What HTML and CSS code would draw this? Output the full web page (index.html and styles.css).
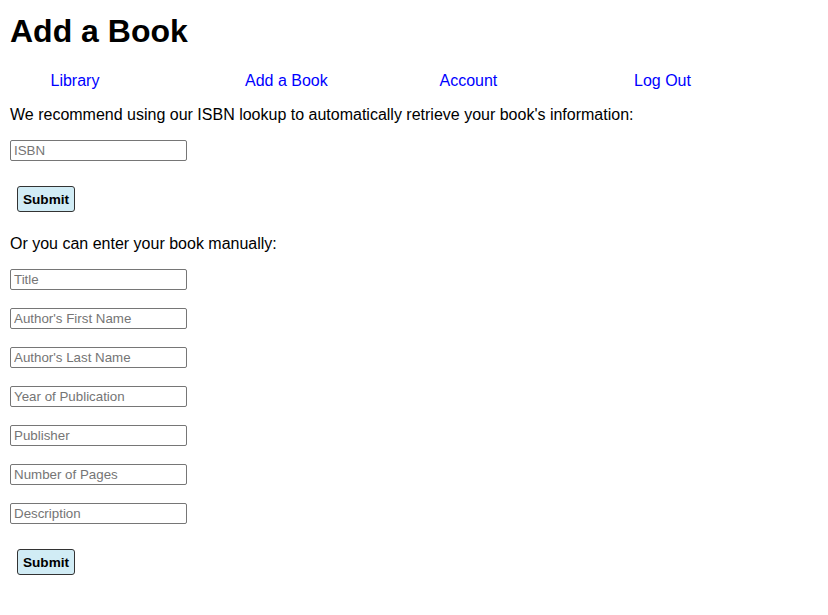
FILE: index.html
```html
<!DOCTYPE html>
<html>
<head>
<meta charset="utf-8">
<title>Add a Book</title>
<link rel="stylesheet" href="styles.css">
</head>
<body>
<h1 class="title">Add a Book</h1>
<nav class="nav">
  <a href="#">Library</a>
  <a href="#">Add a Book</a>
  <a href="#">Account</a>
  <a href="#">Log Out</a>
</nav>
<p class="text">We recommend using our ISBN lookup to automatically retrieve your book's information:</p>
<form class="form">
  <input class="field" type="text" placeholder="ISBN">
  <button class="submit" type="button">Submit</button>
</form>
<p class="text">Or you can enter your book manually:</p>
<form class="form">
  <input class="field" type="text" placeholder="Title">
  <input class="field" type="text" placeholder="Author's First Name">
  <input class="field" type="text" placeholder="Author's Last Name">
  <input class="field" type="text" placeholder="Year of Publication">
  <input class="field" type="text" placeholder="Publisher">
  <input class="field" type="text" placeholder="Number of Pages">
  <input class="field" type="text" placeholder="Description">
  <button class="submit" type="button">Submit</button>
</form>
</body>
</html>
```
FILE: styles.css
```css
html, body {
  margin: 0;
  padding: 0;
  background: #fff;
}
body {
  padding: 0 10px;
  font-family: "Liberation Sans", Arial, sans-serif;
  font-size: 16px;
  color: #000;
}
.title {
  margin: 13px 0 22px;
  font-size: 32px;
  font-weight: bold;
  line-height: 37px;
}
.nav {
  display: grid;
  grid-template-columns: repeat(4, 194.5px);
  padding-left: 40.5px;
  line-height: 18px;
}
.nav a {
  color: #0000ff;
  text-decoration: none;
}
.text {
  margin: 16px 0;
  line-height: 18px;
}
.form {
  display: flex;
  flex-direction: column;
  align-items: flex-start;
  margin: 0;
}
.field {
  display: block;
  box-sizing: border-box;
  width: 177px;
  height: 21px;
  margin: 0 0 18px;
  padding: 1px 3px;
  border: 1px solid #767676;
  border-radius: 2px;
  font-family: "Liberation Sans", Arial, sans-serif;
  font-size: 13.33px;
  color: #000;
  background: #fff;
}
.field::placeholder {
  color: #757575;
}
.submit {
  margin: 7px;
  box-sizing: border-box;
  width: 58px;
  height: 26px;
  padding: 0;
  border: 1px solid #333;
  border-radius: 3px;
  background: #d1ecf5;
  font-family: "Liberation Sans", Arial, sans-serif;
  font-size: 13.6px;
  font-weight: bold;
  color: #000;
}
```
